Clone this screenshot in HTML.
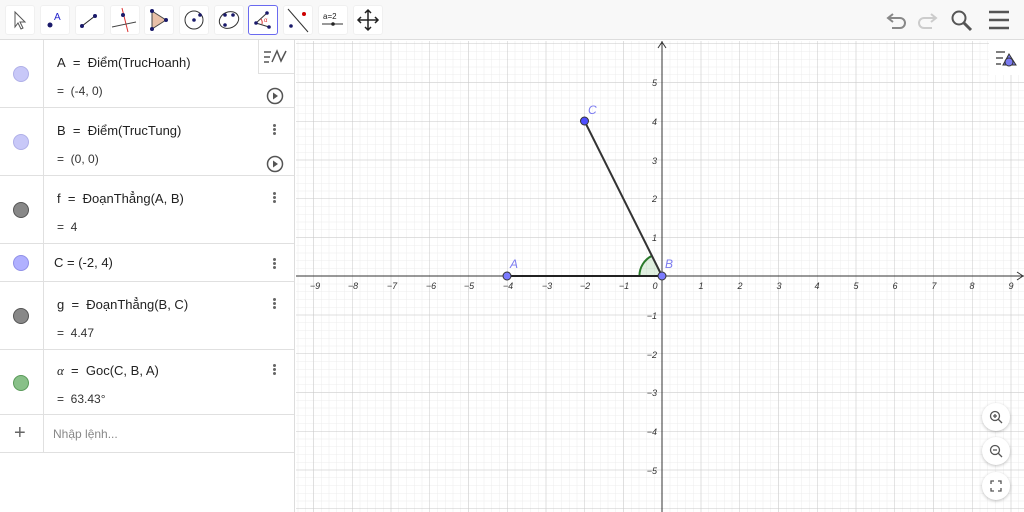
<!DOCTYPE html>
<html><head><meta charset="utf-8"><style>
*{margin:0;padding:0;box-sizing:border-box}
body{width:1024px;height:512px;overflow:hidden;background:#fff;font-family:"Liberation Sans",sans-serif;position:relative}
#tb{position:absolute;left:0;top:0;width:1024px;height:40px;background:#f8f8f8;border-bottom:1px solid #ddd}
.tool{position:absolute;top:5px;width:30px;height:30px;background:#fff;border-radius:3px;border:1px solid #f0f0f0}
.tool.sel{border:1px solid #6a6af0}
#alg{position:absolute;left:0;top:40px;width:295px;height:472px;background:#fff;border-right:1px solid #ddd}
.row{position:absolute;left:0;width:294px;border-bottom:1px solid #e0e0e0}
.row .lc{position:absolute;left:0;top:0;bottom:0;width:44px;border-right:1px solid #e0e0e0}
.dot{position:absolute;left:13px;width:16px;height:16px;border-radius:50%}
.t{position:absolute;left:57px;font-size:13px;color:#222}
.v{position:absolute;left:57px;font-size:12px;color:#333}
.m{position:absolute;left:272px;width:4px;font-size:14px;color:#555;line-height:5px}
.k{position:absolute;width:3px;height:3px;background:#666;border-radius:50%;left:273px}
.zb{position:absolute;left:982px;width:28px;height:28px;border-radius:50%;background:#fff;box-shadow:0 1px 3px rgba(0,0,0,.25)}
</style></head><body>
<svg style="position:absolute;left:0;top:0" width="1024" height="512">
<defs>
<pattern id="mi" patternUnits="userSpaceOnUse" x="662" y="276" width="7.75" height="7.75"><path d="M0 0H7.75M0 0V7.75" stroke="#ececec" stroke-width="1" fill="none"/></pattern>
<pattern id="ma" patternUnits="userSpaceOnUse" x="662" y="276" width="38.75" height="38.75"><path d="M0 0H38.75M0 0V38.75" stroke="#c8c8c8" stroke-width="1" fill="none"/></pattern>
</defs>
<rect x="296" y="41" width="728" height="471" fill="url(#mi)"/>
<rect x="296" y="41" width="728" height="471" fill="url(#ma)"/>
<line x1="296" y1="276" x2="1024" y2="276" stroke="#333" stroke-width="1"/>
<line x1="662" y1="41" x2="662" y2="512" stroke="#333" stroke-width="1"/>
<path d="M1017 272L1023 276L1017 280M658 48L662 42L666 48" stroke="#333" fill="none"/>
<g font-size="9" fill="#333" font-style="italic" text-anchor="middle">
<text x="315" y="289">−9</text><text x="353" y="289">−8</text><text x="392" y="289">−7</text><text x="431" y="289">−6</text><text x="469" y="289">−5</text><text x="508" y="289">−4</text><text x="547" y="289">−3</text><text x="585" y="289">−2</text><text x="624" y="289">−1</text><text x="655" y="289">0</text><text x="701" y="289">1</text><text x="740" y="289">2</text><text x="779" y="289">3</text><text x="817" y="289">4</text><text x="856" y="289">5</text><text x="895" y="289">6</text><text x="934" y="289">7</text><text x="972" y="289">8</text><text x="1011" y="289">9</text>
</g>
<g font-size="9" fill="#333" font-style="italic" text-anchor="end">
<text x="657" y="86">5</text><text x="657" y="125">4</text><text x="657" y="164">3</text><text x="657" y="202">2</text><text x="657" y="241">1</text>
<text x="657" y="319">−1</text><text x="657" y="358">−2</text><text x="657" y="396">−3</text><text x="657" y="435">−4</text><text x="657" y="474">−5</text>
</g>
<path d="M662 276L639.4 276A22.6 22.6 0 0 1 651.9 255.8Z" fill="rgba(0,120,0,0.12)"/>
<path d="M639.4 276A22.6 22.6 0 0 1 651.9 255.8" stroke="#2a7a2a" stroke-width="2" fill="none"/>
<line x1="507" y1="276" x2="662" y2="276" stroke="#222" stroke-width="2"/>
<line x1="662" y1="276" x2="584.5" y2="121" stroke="#333" stroke-width="2"/>
<circle cx="507" cy="276" r="4" fill="#7b7bff" stroke="#333"/>
<circle cx="662" cy="276" r="4" fill="#7b7bff" stroke="#333"/>
<circle cx="584.5" cy="121" r="4" fill="#4d4dff" stroke="#333"/>
<g font-size="12" fill="#7b7bf0" font-style="italic"><text x="510" y="268">A</text><text x="665" y="268">B</text><text x="588" y="114">C</text></g>
</svg>
<div id="tb">
<div class="tool" style="left:5px"></div><div class="tool" style="left:40px"></div><div class="tool" style="left:75px"></div><div class="tool" style="left:110px"></div><div class="tool" style="left:144px"></div><div class="tool" style="left:179px"></div><div class="tool" style="left:214px"></div><div class="tool sel" style="left:248px"></div><div class="tool" style="left:283px"></div><div class="tool" style="left:318px"></div><div class="tool" style="left:353px"></div>
<svg style="position:absolute;left:0;top:0" width="1024" height="40">
<path d="M15 12L15 27L18 23L21 29L23 28L20 22L25 22Z" fill="#fff" stroke="#555"/>
<circle cx="50" cy="25" r="2.5" fill="#1a1a6a"/><text x="54" y="20" font-size="10" fill="#2222cc">A</text>
<line x1="82" y1="26" x2="95" y2="16" stroke="#222"/><circle cx="82" cy="26" r="2" fill="#1a1a6a"/><circle cx="95" cy="16" r="2" fill="#1a1a6a"/>
<line x1="122" y1="8" x2="128" y2="32" stroke="#d33"/><line x1="112" y1="27" x2="136" y2="22" stroke="#444"/><circle cx="123" cy="15" r="2" fill="#1a1a6a"/>
<path d="M152 11L166 20L152 29Z" fill="#e8c0a8" stroke="#444"/><circle cx="152" cy="11" r="2" fill="#1a1a6a"/><circle cx="166" cy="20" r="2" fill="#1a1a6a"/><circle cx="152" cy="29" r="2" fill="#1a1a6a"/>
<circle cx="194" cy="20" r="9" fill="none" stroke="#333"/><circle cx="194" cy="20" r="1.8" fill="#1a1a6a"/><circle cx="200" cy="15" r="1.8" fill="#1a1a6a"/>
<ellipse cx="229" cy="20" rx="10" ry="8" transform="rotate(-25 229 20)" fill="none" stroke="#333"/><circle cx="225" cy="15" r="1.8" fill="#1a1a6a"/><circle cx="233" cy="15" r="1.8" fill="#1a1a6a"/><circle cx="225" cy="25" r="1.8" fill="#1a1a6a"/>
<path d="M267 13L256 23L269 27" stroke="#333" fill="none"/><path d="M261 19A6 6 0 0 1 262 24" stroke="#d33" fill="none"/><text x="264" y="22" font-size="6" fill="#d33">α</text><circle cx="267" cy="13" r="1.8" fill="#1a1a6a"/><circle cx="256" cy="23" r="1.8" fill="#1a1a6a"/><circle cx="269" cy="27" r="1.8" fill="#1a1a6a"/>
<line x1="288" y1="9" x2="308" y2="32" stroke="#333"/><circle cx="304" cy="14" r="2" fill="#c00"/><circle cx="291" cy="26" r="1.8" fill="#1a1a6a"/>
<text x="323" y="19" font-size="8" fill="#222">a=2</text><line x1="322" y1="24" x2="343" y2="24" stroke="#333"/><circle cx="333" cy="24" r="1.8" fill="#222"/>
<path d="M368 10V30M358 20H378M365 13L368 10L371 13M365 27L368 30L371 27M361 17L358 20L361 23M375 17L378 20L375 23" stroke="#222" stroke-width="1.5" fill="none"/>
<path d="M893 14L888 18L893 22M888 18H900A5 5 0 0 1 900 28H892" stroke="#888" stroke-width="2" fill="none"/>
<path d="M931 14L936 18L931 22M936 18H924A5 5 0 0 0 924 28H932" stroke="#ccc" stroke-width="2" fill="none"/>
<circle cx="959" cy="18" r="6.5" stroke="#555" stroke-width="2" fill="none"/><line x1="964" y1="23" x2="971" y2="30" stroke="#555" stroke-width="3"/>
<path d="M989 12H1009M989 20H1009M989 28H1009" stroke="#555" stroke-width="2.5"/>
</svg>
</div>
<div id="alg">
<div class="row" style="top:0;height:68px"><div class="lc"></div><div class="dot" style="top:26px;background:#c8c8f8;border:1px solid #b0b0e8"></div><div class="t" style="top:15px">A&nbsp; = &nbsp;Điểm(TrucHoanh)</div><div class="v" style="top:44px">=&nbsp; (-4, 0)</div></div>
<div class="row" style="top:68px;height:68px"><div class="lc"></div><div class="dot" style="top:26px;background:#c8c8f8;border:1px solid #b0b0e8"></div><div class="t" style="top:15px">B&nbsp; = &nbsp;Điểm(TrucTung)</div><div class="v" style="top:44px">=&nbsp; (0, 0)</div></div>
<div class="row" style="top:136px;height:68px"><div class="lc"></div><div class="dot" style="top:26px;background:#888;border:1px solid #555"></div><div class="t" style="top:15px">f&nbsp; = &nbsp;ĐoạnThẳng(A, B)</div><div class="v" style="top:44px">=&nbsp; 4</div></div>
<div class="row" style="top:204px;height:38px"><div class="lc"></div><div class="dot" style="top:11px;background:#b0b0ff;border:1px solid #9090e8"></div><div class="t" style="top:11px;left:54px">C = (-2, 4)</div></div>
<div class="row" style="top:242px;height:68px"><div class="lc"></div><div class="dot" style="top:26px;background:#888;border:1px solid #555"></div><div class="t" style="top:15px">g&nbsp; = &nbsp;ĐoạnThẳng(B, C)</div><div class="v" style="top:44px">=&nbsp; 4.47</div></div>
<div class="row" style="top:310px;height:65px"><div class="lc"></div><div class="dot" style="top:25px;background:#88c088;border:1px solid #5a9a5a"></div><div class="t" style="top:13px"><i style="font-family:'Liberation Serif'">α</i>&nbsp; = &nbsp;Goc(C, B, A)</div><div class="v" style="top:42px">=&nbsp; 63.43°</div></div>
<div class="row" style="top:375px;height:38px"><div class="lc"><span style="position:absolute;left:14px;top:7px;font-size:20px;color:#666">+</span></div><div class="t" style="top:12px;left:53px;color:#888;font-size:12px">Nhập lệnh...</div></div>
<div class="k" style="top:84px"></div><div class="k" style="top:88px"></div><div class="k" style="top:92px"></div>
<div class="k" style="top:152px"></div><div class="k" style="top:156px"></div><div class="k" style="top:160px"></div>
<div class="k" style="top:218px"></div><div class="k" style="top:222px"></div><div class="k" style="top:226px"></div>
<div class="k" style="top:258px"></div><div class="k" style="top:262px"></div><div class="k" style="top:266px"></div>
<div class="k" style="top:324px"></div><div class="k" style="top:328px"></div><div class="k" style="top:332px"></div>
<svg style="position:absolute;left:258px;top:0" width="36" height="34"><rect x="0" y="0" width="36" height="34" fill="#fff"/><line x1="0.5" y1="0" x2="0.5" y2="34" stroke="#e0e0e0"/><line x1="0" y1="33.5" x2="36" y2="33.5" stroke="#e0e0e0"/><path d="M6 12H13M6 17H12M6 22H11M14 22L19 11L23 21L28 11" stroke="#555" stroke-width="1.5" fill="none"/></svg>
<svg style="position:absolute;left:265px;top:46px" width="20" height="20"><circle cx="10" cy="10" r="7.5" stroke="#555" stroke-width="1.5" fill="none"/><path d="M8 6.5L13 10L8 13.5Z" fill="#555"/></svg>
<svg style="position:absolute;left:265px;top:114px" width="20" height="20"><circle cx="10" cy="10" r="7.5" stroke="#555" stroke-width="1.5" fill="none"/><path d="M8 6.5L13 10L8 13.5Z" fill="#555"/></svg>
</div>
<svg style="position:absolute;left:989px;top:41px" width="35" height="34"><rect x="0" y="0" width="35" height="34" fill="#fff"/><path d="M7 11H16M7 17H14M7 23H12" stroke="#555" stroke-width="1.5"/><path d="M20 13L27 24H14Z" fill="#7b7bf0" stroke="#333"/><circle cx="20" cy="21" r="4" fill="#7b7bf0" stroke="#333"/></svg>
<div class="zb" style="top:403px"></div><div class="zb" style="top:437px"></div><div class="zb" style="top:472px"></div>
<svg style="position:absolute;left:982px;top:403px" width="28" height="100">
<circle cx="13" cy="13" r="4.5" stroke="#555" fill="none" stroke-width="1.3"/><path d="M16 16L20 20M11 13H15M13 11V15" stroke="#555" stroke-width="1.3"/>
<circle cx="13" cy="47" r="4.5" stroke="#555" fill="none" stroke-width="1.3"/><path d="M16 50L20 54M11 47H15" stroke="#555" stroke-width="1.3"/>
<path d="M9 81V78H12M16 78H19V81M19 85V88H16M12 88H9V85" stroke="#555" stroke-width="1.3" fill="none"/>
</svg>
</body></html>
